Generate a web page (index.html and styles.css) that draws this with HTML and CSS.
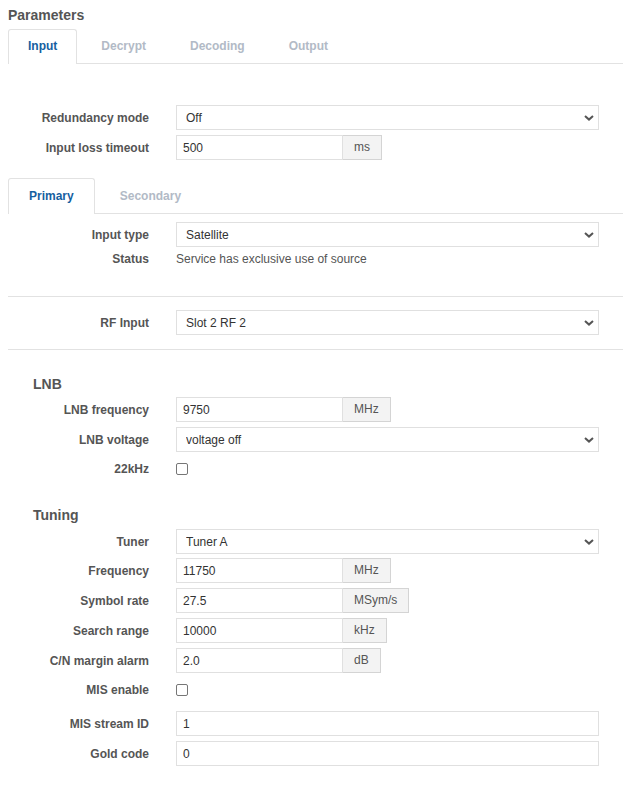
FILE: index.html
```html
<!DOCTYPE html>
<html lang="en">
<head>
    <meta charset="UTF-8">
    <meta name="viewport" content="width=device-width, initial-scale=1.0">
    <title>Parameters</title>
    <link rel="stylesheet" href="styles.css">
</head>
<body>
    <h2 class="title">Parameters</h2>
    <ul class="tabs">
        <li class="tab active">Input</li>
        <li class="tab">Decrypt</li>
        <li class="tab">Decoding</li>
        <li class="tab">Output</li>
    </ul>

    <div class="pane top-pane">
        <div class="row">
            <label class="label">Redundancy mode</label>
            <div class="select-wrap">
                <select class="select"><option>Off</option></select>
                <svg class="chevron" width="10" height="6" viewBox="0 0 10 6"><path d="M1 1l4 3.6L9 1" fill="none" stroke="#555" stroke-width="2"/></svg>
            </div>
        </div>
        <div class="row">
            <label class="label">Input loss timeout</label>
            <div class="group">
                <input class="input" type="text" value="500">
                <span class="addon">ms</span>
            </div>
        </div>
    </div>

    <ul class="tabs sub-tabs">
        <li class="tab active">Primary</li>
        <li class="tab">Secondary</li>
    </ul>

    <div class="pane">
        <div class="row">
            <label class="label">Input type</label>
            <div class="select-wrap">
                <select class="select"><option>Satellite</option></select>
                <svg class="chevron" width="10" height="6" viewBox="0 0 10 6"><path d="M1 1l4 3.6L9 1" fill="none" stroke="#555" stroke-width="2"/></svg>
            </div>
        </div>
        <div class="row text-row">
            <label class="label">Status</label>
            <span class="value">Service has exclusive use of source</span>
        </div>
    </div>

    <hr class="divider status-divider">

    <div class="row">
        <label class="label">RF Input</label>
        <div class="select-wrap">
            <select class="select"><option>Slot 2 RF 2</option></select>
            <svg class="chevron" width="10" height="6" viewBox="0 0 10 6"><path d="M1 1l4 3.6L9 1" fill="none" stroke="#555" stroke-width="2"/></svg>
        </div>
    </div>

    <hr class="divider rf-divider">

    <h3 class="section">LNB</h3>
    <div class="row">
        <label class="label">LNB frequency</label>
        <div class="group">
            <input class="input" type="text" value="9750">
            <span class="addon">MHz</span>
        </div>
    </div>
    <div class="row">
        <label class="label">LNB voltage</label>
        <div class="select-wrap">
            <select class="select"><option>voltage off</option></select>
            <svg class="chevron" width="10" height="6" viewBox="0 0 10 6"><path d="M1 1l4 3.6L9 1" fill="none" stroke="#555" stroke-width="2"/></svg>
        </div>
    </div>
    <div class="row check-row">
        <label class="label">22kHz</label>
        <span class="checkbox"></span>
    </div>

    <h3 class="section tuning">Tuning</h3>
    <div class="row">
        <label class="label">Tuner</label>
        <div class="select-wrap">
            <select class="select"><option>Tuner A</option></select>
            <svg class="chevron" width="10" height="6" viewBox="0 0 10 6"><path d="M1 1l4 3.6L9 1" fill="none" stroke="#555" stroke-width="2"/></svg>
        </div>
    </div>
    <div class="row tight">
        <label class="label">Frequency</label>
        <div class="group">
            <input class="input" type="text" value="11750">
            <span class="addon">MHz</span>
        </div>
    </div>
    <div class="row">
        <label class="label">Symbol rate</label>
        <div class="group">
            <input class="input" type="text" value="27.5">
            <span class="addon">MSym/s</span>
        </div>
    </div>
    <div class="row">
        <label class="label">Search range</label>
        <div class="group">
            <input class="input" type="text" value="10000">
            <span class="addon">kHz</span>
        </div>
    </div>
    <div class="row">
        <label class="label">C/N margin alarm</label>
        <div class="group">
            <input class="input" type="text" value="2.0">
            <span class="addon">dB</span>
        </div>
    </div>
    <div class="row check-row">
        <label class="label">MIS enable</label>
        <span class="checkbox"></span>
    </div>
    <div class="row">
        <label class="label">MIS stream ID</label>
        <input class="input wide" type="text" value="1">
    </div>
    <div class="row">
        <label class="label">Gold code</label>
        <input class="input wide" type="text" value="0">
    </div>
</body>
</html>
```

FILE: styles.css
```css
body {
    margin: 0;
    padding: 7px 0 0 8px;
    font-family: 'Liberation Sans', Arial, sans-serif;
    font-size: 12px;
    color: #555;
    background-color: #fff;
}
.title {
    margin: 0 0 6px 0;
    font-size: 14px;
    line-height: 16px;
    color: #555;
}
.tabs {
    display: flex;
    margin: 0;
    padding: 0;
    list-style: none;
    border-bottom: 1px solid #e2e2e2;
}
.tab {
    height: 33px;
    line-height: 33px;
    padding: 0 19px;
    margin-right: 4px;
    margin-bottom: -1px;
    font-weight: bold;
    color: #b2bac6;
    border: 1px solid transparent;
    border-bottom: none;
    border-radius: 3px 3px 0 0;
}
.tab.active {
    color: #16609f;
    background-color: #fff;
    border-color: #e2e2e2;
    height: 34px;
}
.sub-tabs .tab {
    padding: 0 20px;
    height: 34px;
    line-height: 34px;
}
.sub-tabs .tab.active {
    height: 35px;
}
.pane {
    padding-top: 8px;
}
.top-pane {
    padding-top: 41px;
    margin-bottom: 18px;
}
.row {
    display: flex;
    align-items: center;
    height: 25px;
    margin-bottom: 5px;
    padding-right: 24px;
}
.row.tight {
    margin-top: -1px;
}
.label {
    width: 141px;
    flex-shrink: 0;
    margin-right: 27px;
    text-align: right;
    font-weight: bold;
    color: #555;
}
.text-row {
    height: 14px;
}
.value {
    color: #555;
}
.check-row {
    height: 24px;
    margin-bottom: 9px;
}
.select-wrap {
    position: relative;
    flex: 1;
    height: 25px;
}
.select {
    appearance: none;
    -webkit-appearance: none;
    width: 100%;
    height: 25px;
    margin: 0;
    padding: 0 24px 0 9px;
    font-family: inherit;
    font-size: 12px;
    color: #333;
    background-color: #fff;
    border: 1px solid #e0e0e0;
    border-radius: 0;
    outline: none;
}
.chevron {
    position: absolute;
    right: 5px;
    top: 10px;
    pointer-events: none;
}
.group {
    display: flex;
    height: 25px;
}
.input {
    box-sizing: border-box;
    width: 167px;
    height: 25px;
    margin: 0;
    padding: 0 6px;
    font-family: inherit;
    font-size: 12px;
    color: #333;
    background-color: #fff;
    border: 1px solid #e0e0e0;
    border-radius: 0;
    outline: none;
}
.input.wide {
    flex: 1;
    width: auto;
}
.addon {
    box-sizing: border-box;
    height: 25px;
    line-height: 23px;
    padding: 0 11px;
    color: #555;
    background-color: #f3f3f3;
    border: 1px solid #d4d4d4;
    border-left: none;
}
.checkbox {
    box-sizing: border-box;
    width: 12px;
    height: 12px;
    border: 1px solid #767676;
    border-radius: 2px;
    background-color: #fff;
}
.divider {
    margin: 0;
    border: none;
    border-top: 1px solid #e2e2e2;
}
.status-divider {
    margin-top: 30px;
    margin-bottom: 13px;
}
.rf-divider {
    margin-top: 14px;
}
.section {
    margin: 26px 0 5px 25px;
    font-size: 14px;
    line-height: 16px;
    color: #555;
}
.section.tuning {
    margin-top: 26px;
    margin-bottom: 6px;
}
```
